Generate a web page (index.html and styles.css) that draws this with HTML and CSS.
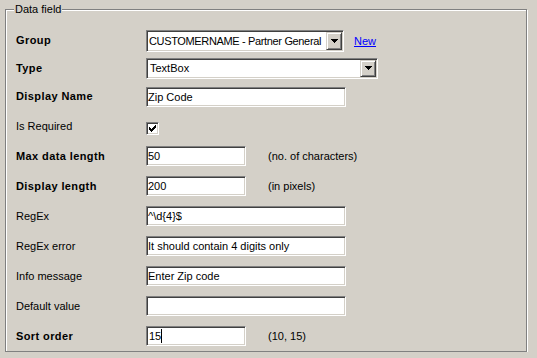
FILE: index.html
```html
<!DOCTYPE html>
<html lang="en">
<head>
  <meta charset="UTF-8">
  <title>Data field</title>
  <link rel="stylesheet" href="styles.css">
</head>
<body>
  <form class="page" onsubmit="return false;">
    <fieldset class="group">
      <legend>Data field</legend>
      <div class="rows">
        <label class="lbl strong">Group</label>
        <div class="ctl">
          <div class="combo combo-group">
            <span class="combo-text">CUSTOMERNAME - Partner General</span>
            <span class="drop"><svg width="7" height="4" viewBox="0 0 7 4"><path d="M0 0h7v1H0zM1 1h5v1H1zM2 2h3v1H2zM3 3h1v1H3z"/></svg></span>
          </div>
          <a href="#" class="new-link">New</a>
        </div>

        <label class="lbl strong">Type</label>
        <div class="ctl">
          <div class="combo combo-type">
            <span class="combo-text">TextBox</span>
            <span class="drop"><svg width="7" height="4" viewBox="0 0 7 4"><path d="M0 0h7v1H0zM1 1h5v1H1zM2 2h3v1H2zM3 3h1v1H3z"/></svg></span>
          </div>
        </div>

        <label class="lbl strong" for="dispName">Display Name</label>
        <div class="ctl"><input class="field" id="dispName" type="text" value="Zip Code"></div>

        <label class="lbl">Is Required</label>
        <div class="ctl">
          <span class="check"><svg width="7" height="7" viewBox="0 0 7 7"><path d="M0 2h1v3H0zM1 3h1v3H1zM2 4h1v3H2zM3 3h1v3H3zM4 2h1v3H4zM5 1h1v3H5zM6 0h1v3H6z"/></svg></span>
        </div>

        <label class="lbl strong" for="maxLen">Max data length</label>
        <div class="ctl"><input class="field short" id="maxLen" type="text" value="50"><span class="hint">(no. of characters)</span></div>

        <label class="lbl strong" for="dispLen">Display length</label>
        <div class="ctl"><input class="field short" id="dispLen" type="text" value="200"><span class="hint">(in pixels)</span></div>

        <label class="lbl" for="regex">RegEx</label>
        <div class="ctl"><input class="field" id="regex" type="text" value="^\d{4}$"></div>

        <label class="lbl" for="regexErr">RegEx error</label>
        <div class="ctl"><input class="field" id="regexErr" type="text" value="It should contain 4 digits only"></div>

        <label class="lbl" for="infoMsg">Info message</label>
        <div class="ctl"><input class="field" id="infoMsg" type="text" value="Enter Zip code"></div>

        <label class="lbl" for="defVal">Default value</label>
        <div class="ctl"><input class="field" id="defVal" type="text" value=""></div>

        <label class="lbl strong">Sort order</label>
        <div class="ctl"><div class="field short focused">15<span class="caret"></span></div><span class="hint">(10, 15)</span></div>
      </div>
    </fieldset>
  </form>
</body>
</html>
```
FILE: styles.css
```css
body { margin: 0; background: #d4d0c8; font-family: "Liberation Sans", Arial, sans-serif; font-size: 11px; color: #000; }
.page { padding: 3px 10px 0 5px; }
.group { margin: 0; padding: 11px 10px 0 10px; min-width: 0; border: 1px solid #808080; box-shadow: 1px 1px 0 #fff, inset 1px 1px 0 #fff; }
.group legend { margin-left: -2px; padding: 0 1px; line-height: 13px; background: #d4d0c8; }

.rows { display: grid; grid-template-columns: 130px 1fr; grid-template-rows: 27px 28px 29px repeat(8, 30px); align-items: center; }
.lbl { line-height: 13px; }
.lbl.strong { font-weight: bold; letter-spacing: 0.4px; }
.ctl { display: flex; align-items: center; }

.combo { display: flex; box-sizing: border-box; height: 21px; padding: 1px; background: #fff; border: 1px solid; border-color: #808080 #fff #fff #808080; box-shadow: inset 1px 1px 0 #404040, inset -1px -1px 0 #d4d0c8; }
.combo-group { width: 198px; height: 22px; }
.combo-type { width: 232px; }
.combo-text { flex: 1; overflow: hidden; white-space: nowrap; padding-left: 2px; line-height: 17px; }
.combo-group .combo-text { line-height: 18px; padding-left: 1px; letter-spacing: -0.35px; }
.drop { display: flex; align-items: center; justify-content: center; box-sizing: border-box; width: 16px; background: #d4d0c8; border: 1px solid; border-color: #d4d0c8 #404040 #404040 #d4d0c8; box-shadow: inset 1px 1px 0 #fff, inset -1px -1px 0 #808080; }
.drop svg { display: block; shape-rendering: crispEdges; }

.new-link { margin-left: 10px; color: #0000ff; text-decoration: underline; }

.field { box-sizing: border-box; width: 200px; height: 20px; margin: 0; padding: 0 1px; font: inherit; color: #000; background: #fff; outline: none; border: 1px solid; border-color: #808080 #fff #fff #808080; box-shadow: inset 1px 1px 0 #404040, inset -1px -1px 0 #d4d0c8; }
.field.short { width: 100px; }
div.field { display: flex; align-items: center; padding-left: 2px; }
.caret { display: inline-block; width: 1px; height: 14px; background: #000; }
.hint { margin-left: 22px; }

.check { display: flex; align-items: center; justify-content: center; box-sizing: border-box; width: 13px; height: 13px; margin-top: 4px; background: #fff; border: 1px solid; border-color: #808080 #fff #fff #808080; box-shadow: inset 1px 1px 0 #404040, inset -1px -1px 0 #d4d0c8; }
.check svg { display: block; shape-rendering: crispEdges; }
```
